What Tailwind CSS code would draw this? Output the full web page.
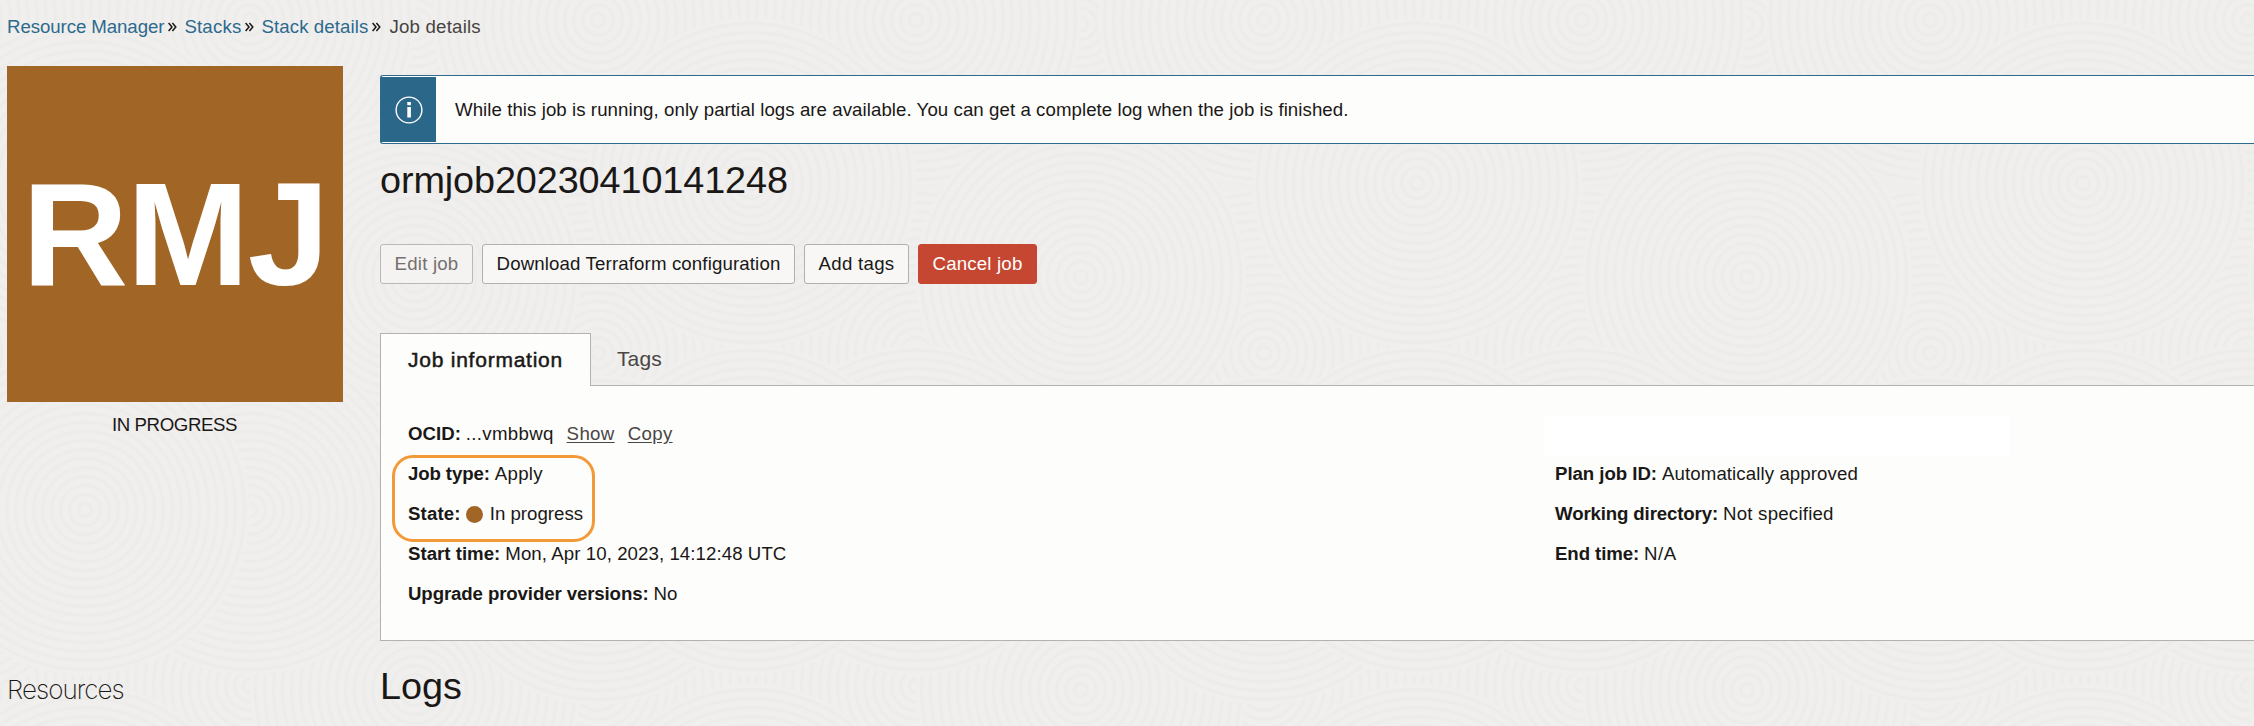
<!DOCTYPE html>
<html lang="en">
<head>
<meta charset="utf-8">
<title>Job details</title>
<script src="https://cdn.jsdelivr.net/npm/@tailwindcss/browser@4"></script>
</head>
<body class="relative h-[726px] w-[2254px] overflow-hidden bg-[#efeeed] font-['Liberation_Sans',Arial,sans-serif] text-[18.67px] text-[#1a1816]">
<svg class="absolute inset-0 -z-10" width="2254" height="726" aria-hidden="true">
  <defs>
    <radialGradient id="ring" gradientUnits="userSpaceOnUse" cx="0" cy="0" r="9" spreadMethod="repeat">
      <stop offset="0" stop-color="#f0efee"/><stop offset=".4" stop-color="#f0efee"/><stop offset=".75" stop-color="#ebebea"/><stop offset="1" stop-color="#f0efee"/>
    </radialGradient>
    <circle id="swirl" r="165" fill="url(#ring)"/>
    <g id="tile">
      <use href="#swirl" x="598" y="353"/>
      <use href="#swirl" x="250" y="353"/>
      <use href="#swirl" x="598" y="20"/>
      <use href="#swirl" x="250" y="20"/>
      <use href="#swirl" x="415" y="690"/>
      <use href="#swirl" x="598" y="540"/>
      <use href="#swirl" x="415" y="277"/>
      <use href="#swirl" x="250" y="510"/>
      <use href="#swirl" x="85" y="183"/>
      <use href="#swirl" x="85" y="510"/>
    </g>
    <g id="band"><use href="#tile" x="-666"/><use href="#tile"/><use href="#tile" x="666"/><use href="#tile" x="1332"/><use href="#tile" x="1998"/></g>
  </defs>
  <use href="#band" y="666"/><use href="#band" y="-666"/><use href="#band"/>
</svg>

<nav class="flex h-[66px] items-start pt-[7px] pl-[7px] leading-[40px] text-[#2d6a8d]">
  <a class="tracking-[-0.08px]">Resource Manager</a>
  <svg class="mt-[15px] mr-[7px] ml-[4px]" width="9" height="10" viewBox="0 0 9 10" fill="none" stroke="#1a1816" stroke-width="1.5"><path d="M.6 1l3.4 4L.6 9M4.4 1l3.4 4-3.4 4"/></svg>
  <a class="tracking-[0.17px]">Stacks</a>
  <svg class="mt-[15px] mr-[7px] ml-[4px]" width="9" height="10" viewBox="0 0 9 10" fill="none" stroke="#1a1816" stroke-width="1.5"><path d="M.6 1l3.4 4L.6 9M4.4 1l3.4 4-3.4 4"/></svg>
  <a class="tracking-[0.1px]">Stack details</a>
  <svg class="mt-[15px] mr-[8px] ml-[4px]" width="9" height="10" viewBox="0 0 9 10" fill="none" stroke="#1a1816" stroke-width="1.5"><path d="M.6 1l3.4 4L.6 9M4.4 1l3.4 4-3.4 4"/></svg>
  <span class="tracking-[0.2px] text-[#474341]">Job details</span>
</nav>

<div class="flex pl-[7px]">
  <aside class="w-[336px] shrink-0">
    <div class="flex h-[336px] items-center justify-center bg-[#a16626] text-[147px] leading-[336px] font-bold text-white"><span class="tracking-[-1.5px]">RMJ</span></div>
    <div class="mt-[3px] pr-px text-center leading-[40px] tracking-[-0.4px]">IN PROGRESS</div>
    <h2 class="mt-[225px] font-['Inter',sans-serif] text-[26px] leading-[40px] font-extralight tracking-[-0.95px]">Resources</h2>
  </aside>

  <main class="ml-[37px] grow pt-[9px]">
    <div class="flex h-[69px] items-stretch rounded-l-[3px] border border-r-0 border-[#2d6a8d] bg-[#fdfdfc] py-px">
      <div class="flex w-[55px] items-center justify-center bg-[#2b6789]">
        <svg width="28" height="28" viewBox="0 0 28 28" fill="none"><circle cx="14" cy="14" r="12.9" stroke="#fff" stroke-width="1.4"/><path d="M12.3 6h3.6v3.2h-3.6zM12.3 11h3.6v10.6h-3.6z" fill="#fff"/></svg>
      </div>
      <p class="pl-[19px] leading-[65px] tracking-[0.06px]">While this job is running, only partial logs are available. You can get a complete log when the job is finished.</p>
    </div>

    <h1 class="mt-[11px] text-[37.8px] leading-[50px] tracking-[-0.1px]">ormjob20230410141248</h1>

    <div class="mt-[39px] flex h-[40px] gap-[9px] leading-[38px]">
      <button class="flex w-[93px] justify-center rounded-[3px] border border-[#bbb8b4] bg-[#f4f3f2] tracking-[0.2px] text-[#74706c]">Edit job</button>
      <button class="flex w-[313px] justify-center rounded-[3px] border border-[#b2afac] bg-[#f8f7f6] tracking-[0.13px]">Download Terraform configuration</button>
      <button class="flex w-[105px] justify-center rounded-[3px] border border-[#b2afac] bg-[#f8f7f6] tracking-[0.28px]">Add tags</button>
      <button class="flex w-[119px] justify-center rounded-[3px] border border-[#c54731] bg-[#c54731] tracking-[0.18px] text-white">Cancel job</button>
    </div>

    <div class="relative z-10 mt-[49px] flex h-[53px] text-[21px] leading-[52px]">
      <div class="w-[211px] border border-b-0 border-[#b5b1ae] bg-[#fdfdfc] pl-[27px] tracking-[0.76px] [-webkit-text-stroke:0.5px]">Job information</div>
      <div class="pl-[26px] leading-[51px] tracking-[0.1px] text-[#4a4644]">Tags</div>
    </div>
    <section class="-mt-px flex h-[256px] border border-r-0 border-[#b5b1ae] bg-[#fdfdfc] pt-[28px] leading-[40px]">
      <div class="relative w-[1174px] shrink-0 pl-[27px]">
        <div class="absolute top-[41px] left-[11px] h-[87px] w-[203px] rounded-[21px] border-3 border-[#f29a38]"></div>
        <p class="flex gap-[5px]"><b>OCID:</b><span class="tracking-[0.3px]">...vmbbwq</span><a class="ml-[8px] tracking-[0.35px] text-[#4a4644] underline underline-offset-2">Show</a><a class="ml-[8px] tracking-[0.35px] text-[#4a4644] underline underline-offset-2">Copy</a></p>
        <p class="flex gap-[5px]"><b class="tracking-[-0.12px]">Job type:</b><span class="tracking-[0.25px]">Apply</span></p>
        <p class="flex items-center gap-[5px]"><b class="tracking-[0.15px]">State:</b><i class="size-[17px] rounded-full bg-[#a16626]"></i><span class="ml-[2px]">In progress</span></p>
        <p class="flex gap-[5px]"><b>Start time:</b><span class="tracking-[0.07px]">Mon, Apr 10, 2023, 14:12:48 UTC</span></p>
        <p class="flex gap-[5px]"><b class="tracking-[-0.12px]">Upgrade provider versions:</b><span>No</span></p>
      </div>
      <div>
        <div class="mt-[3px] -mb-[2px] -ml-[11px] h-[39px] w-[466px] bg-white"></div>
        <p class="flex gap-[5px]"><b class="tracking-[-0.05px]">Plan job ID:</b><span class="tracking-[0.09px]">Automatically approved</span></p>
        <p class="flex gap-[5px]"><b class="tracking-[-0.14px]">Working directory:</b><span class="tracking-[0.22px]">Not specified</span></p>
        <p class="flex gap-[5px]"><b class="tracking-[-0.1px]">End time:</b><span class="tracking-[0.5px]">N/A</span></p>
      </div>
    </section>
    <h2 class="mt-[19px] text-[37.8px] leading-[52px]">Logs</h2>
  </main>
</div>
</body>
</html>
